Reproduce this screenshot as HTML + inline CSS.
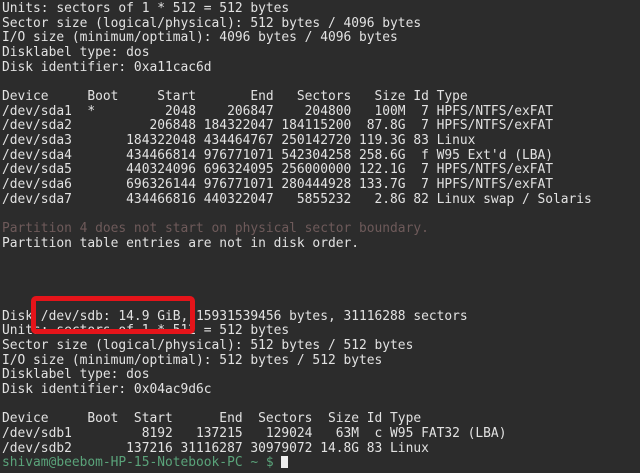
<!DOCTYPE html>
<html><head><meta charset="utf-8"><style>
html,body{margin:0;padding:0;background:#2c2c2c;width:640px;height:473px;overflow:hidden}
pre{margin:0;position:absolute;left:2px;top:2px;font-family:"DejaVu Sans Mono","Liberation Mono",monospace;font-size:12.9px;line-height:14.65px;color:#e2e2e2}
.d{color:#6e5a5a}.g{color:#5aa37a}
.c{display:inline-block;width:7px;height:12px;background:#eee;vertical-align:-2px}
.box{position:absolute;left:31px;top:296px;width:154px;height:28px;border:5px solid #e5141a;border-radius:5px}
</style></head><body>
<pre>Units: sectors of 1 * 512 = 512 bytes
Sector size (logical/physical): 512 bytes / 4096 bytes
I/O size (minimum/optimal): 4096 bytes / 4096 bytes
Disklabel type: dos
Disk identifier: 0xa11cac6d

Device     Boot     Start       End   Sectors   Size Id Type
/dev/sda1  *         2048    206847    204800   100M  7 HPFS/NTFS/exFAT
/dev/sda2          206848 184322047 184115200  87.8G  7 HPFS/NTFS/exFAT
/dev/sda3       184322048 434464767 250142720 119.3G 83 Linux
/dev/sda4       434466814 976771071 542304258 258.6G  f W95 Ext'd (LBA)
/dev/sda5       440324096 696324095 256000000 122.1G  7 HPFS/NTFS/exFAT
/dev/sda6       696326144 976771071 280444928 133.7G  7 HPFS/NTFS/exFAT
/dev/sda7       434466816 440322047   5855232   2.8G 82 Linux swap / Solaris

<span class="d">Partition 4 does not start on physical sector boundary.</span>
Partition table entries are not in disk order.




Disk /dev/sdb: 14.9 GiB, 15931539456 bytes, 31116288 sectors
Units: sectors of 1 * 512 = 512 bytes
Sector size (logical/physical): 512 bytes / 512 bytes
I/O size (minimum/optimal): 512 bytes / 512 bytes
Disklabel type: dos
Disk identifier: 0x04ac9d6c

Device     Boot  Start      End  Sectors  Size Id Type
/dev/sdb1         8192   137215   129024   63M  c W95 FAT32 (LBA)
/dev/sdb2       137216 31116287 30979072 14.8G 83 Linux
<span class="g">shivam@beebom-HP-15-Notebook-PC ~ $</span> <span class="c"></span></pre>
<div class="box"></div>
</body></html>
